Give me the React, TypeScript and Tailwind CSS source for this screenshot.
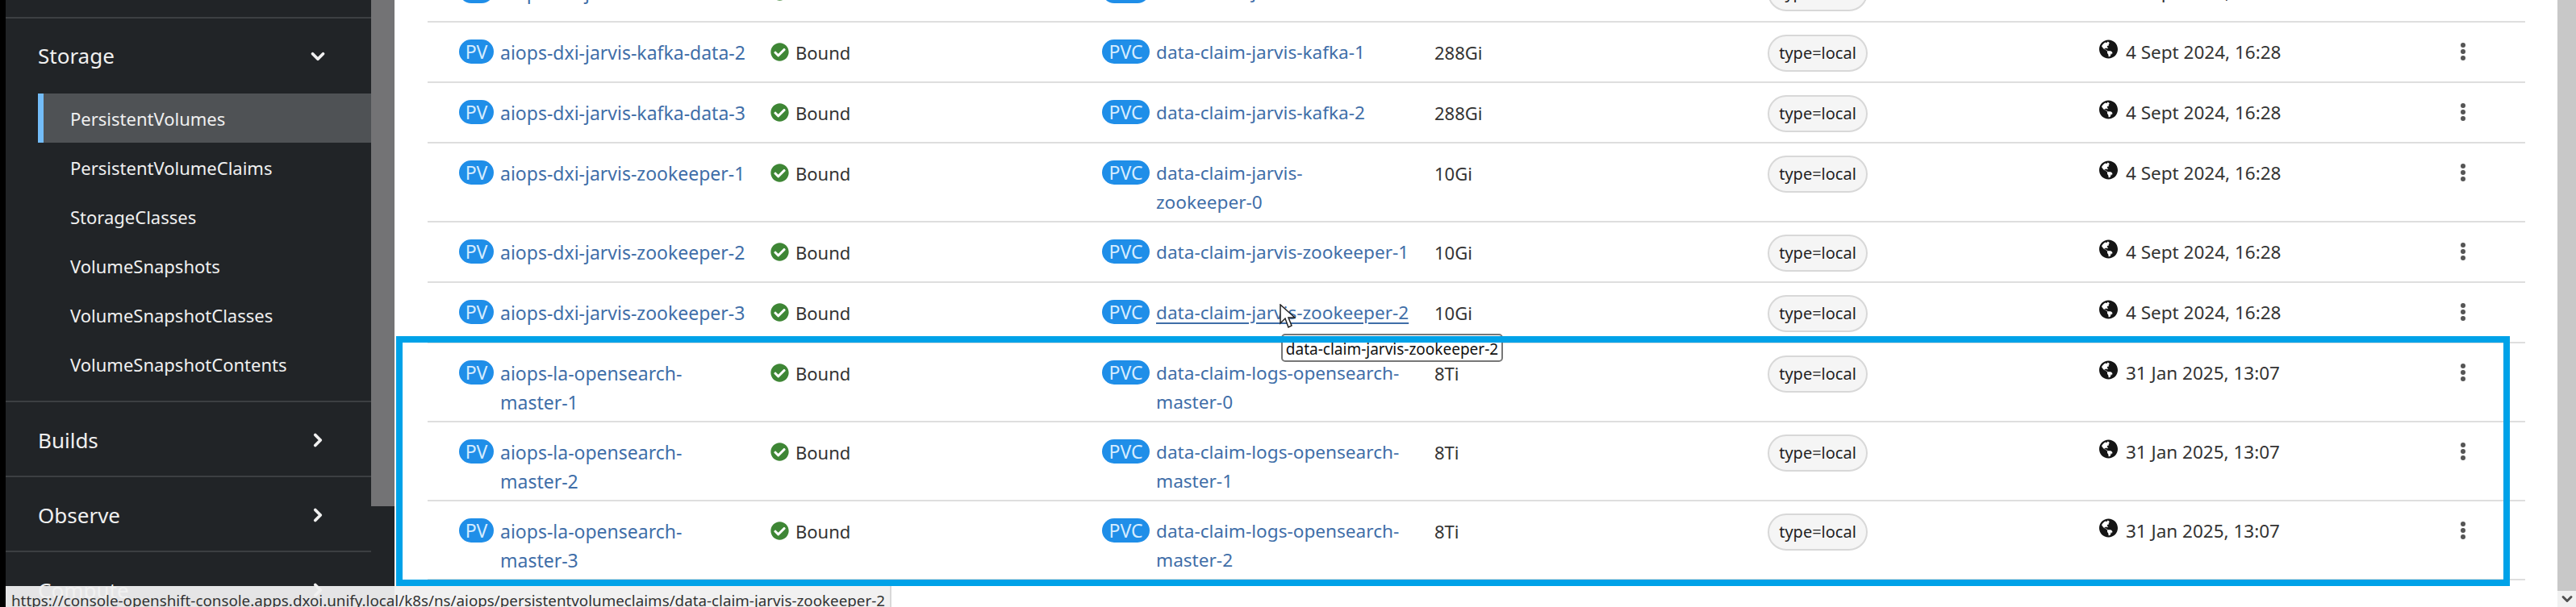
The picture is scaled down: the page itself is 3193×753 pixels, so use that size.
import React from "react";
import { ChevronDown, ChevronRight } from "lucide-react";

const storageLinks = [
  "PersistentVolumes",
  "PersistentVolumeClaims",
  "StorageClasses",
  "VolumeSnapshots",
  "VolumeSnapshotClasses",
  "VolumeSnapshotContents",
];

const rows = [
  { name: "aiops-dxi-jarvis-kafka-data-1", claim: "data-claim-jarvis-kafka-0", size: "288Gi", date: "4 Sept 2024, 16:28" },
  { name: "aiops-dxi-jarvis-kafka-data-2", claim: "data-claim-jarvis-kafka-1", size: "288Gi", date: "4 Sept 2024, 16:28" },
  { name: "aiops-dxi-jarvis-kafka-data-3", claim: "data-claim-jarvis-kafka-2", size: "288Gi", date: "4 Sept 2024, 16:28" },
  { name: "aiops-dxi-jarvis-zookeeper-1", claim: "data-claim-jarvis-\nzookeeper-0", size: "10Gi", date: "4 Sept 2024, 16:28" },
  { name: "aiops-dxi-jarvis-zookeeper-2", claim: "data-claim-jarvis-zookeeper-1", size: "10Gi", date: "4 Sept 2024, 16:28" },
  { name: "aiops-dxi-jarvis-zookeeper-3", claim: "data-claim-jarvis-zookeeper-2", size: "10Gi", date: "4 Sept 2024, 16:28", hovered: true },
  { name: "aiops-la-opensearch-\nmaster-1", claim: "data-claim-logs-opensearch-\nmaster-0", size: "8Ti", date: "31 Jan 2025, 13:07" },
  { name: "aiops-la-opensearch-\nmaster-2", claim: "data-claim-logs-opensearch-\nmaster-1", size: "8Ti", date: "31 Jan 2025, 13:07" },
  { name: "aiops-la-opensearch-\nmaster-3", claim: "data-claim-logs-opensearch-\nmaster-2", size: "8Ti", date: "31 Jan 2025, 13:07" },
];

const Badge = ({ label, width }: { label: string; width: string }) => (
  <span className={`${width} h-[30px] mt-[6px] shrink-0 rounded-full bg-[#1f8ee8] text-[#d5ecff] text-[23px] leading-[30px] text-center`}>
    {label}
  </span>
);

const BoundIcon = () => (
  <svg viewBox="0 0 512 512" className="w-[23px] h-[23px] mt-[10px] shrink-0 fill-[#3e8635]">
    <path d="M504 256c0 137-111 248-248 248S8 393 8 256 119 8 256 8s248 111 248 248zM227.3 387.3l184-184c6.200-6.200 6.200-16.400 0-22.600l-22.600-22.600c-6.200-6.200-16.400-6.200-22.600 0L216 308.100l-70.100-70.100c-6.200-6.200-16.400-6.200-22.600 0l-22.600 22.600c-6.200 6.200-6.200 16.400 0 22.600l104 104c6.200 6.200 16.400 6.200 22.600 0z" />
  </svg>
);

const GlobeIcon = () => (
  <svg viewBox="0 0 496 512" className="w-[23px] h-[24px] mt-[6px] shrink-0 fill-[#151515]">
    <path d="M248 8C111 8 0 119 0 256s111 248 248 248 248-111 248-248S385 8 248 8zm82.300 357.600c-3.900 3.900-8 8-11.300 11.300-3 3-5.100 6.700-6.200 10.700-1.500 5.700-2.700 11.400-4.800 16.900l-17.400 46.800c-13.800 3-28 4.700-42.600 4.700v-27.400c1.700-12.600-7.600-36.300-22.600-51.300-6-6-9.400-14.100-9.400-22.600v-32c0-11.600-6.300-22.300-16.500-28-14.400-8-34.800-19.100-48.800-26.100-11.500-5.800-22.100-13.100-31.700-21.800l-.8-.7c-6.800-6.200-12.900-13.100-18.100-20.700-9.400-13.800-24.700-36.500-34.700-51.300 20.600-45.700 57.600-82.500 103.500-102.700l24 12c10.600 5.300 23.100-2.400 23.100-14.300v-11.300c8-1.300 16.100-2.100 24.400-2.400l28.300 28.300c6.200 6.200 6.200 16.400 0 22.600L264 110.600l-12.500 12.500c-3.100 3.100-3.100 8.200 0 11.300l5.700 5.700c3.100 3.100 3.100 8.200 0 11.300l-9.700 9.700c-1.500 1.500-3.500 2.300-5.700 2.300h-10.900c-2.100 0-4.100.8-5.600 2.300l-12.100 11.800c-2.500 2.400-3.100 6.200-1.600 9.300l19 37.900c3.200 6.500-1.500 14.100-8.700 14.100h-6.900c-2.300 0-4.600-.8-6.300-2.400l-11.300-9.800c-2.600-2.200-6.200-2.800-9.300-1.700L140.700 243c-2.900 1-4.800 3.700-4.800 6.700 0 2.700 1.500 5.100 3.900 6.300l13.400 6.700c11.400 5.700 24 8.700 36.700 8.700s27.300 33 38.700 33h72.500c9.700 0 18.900 3.800 25.700 10.600l15.600 15.600c6.500 6.500 10.200 15.400 10.200 24.600 0 17.900-7.100 35-19.700 47.700z" />
  </svg>
);

const Kebab = () => (
  <span className="flex flex-col gap-[2px] items-center w-[6px] mt-[10px]">
    <span className="w-[6px] h-[6px] rounded-full bg-[#555]" />
    <span className="w-[6px] h-[6px] rounded-full bg-[#555]" />
    <span className="w-[6px] h-[6px] rounded-full bg-[#555]" />
  </span>
);

const App = () => {
  return (
    <div className="relative w-[3193px] h-[753px] overflow-hidden bg-white flex font-['Noto_Sans',sans-serif]">
      <aside className="w-[489px] h-full shrink-0 border-l-[7px] border-black bg-[#212427] flex">
        <nav className="w-[453px] text-[#f0f0f0]">
          <div className="h-[23px] border-b-2 border-[#3c3f42]" />
          <div className="h-[93px] pl-[40px] pr-[53px] flex items-center justify-between text-[26px]">
            <span>Storage</span>
            <ChevronDown size={26} strokeWidth={3.5} />
          </div>
          <ul className="pl-[40px] text-[22px]">
            {storageLinks.map((link, i) => (
              <li
                key={link}
                className={
                  i === 0
                    ? "h-[61px] flex items-center pt-[2px] pl-[33px] border-l-[7px] border-[#73bcf7] bg-[#4f5255]"
                    : "h-[61px] flex items-center pt-[2px] pl-[40px]"
                }
              >
                {link}
              </li>
            ))}
          </ul>
          <div className="h-[17px] border-b-2 border-[#3c3f42]" />
          {["Builds", "Observe", "Compute"].map((group) => (
            <div
              key={group}
              className="h-[93px] pt-[3px] pl-[40px] pr-[53px] flex items-center justify-between text-[26px] border-b-2 border-[#3c3f42]"
            >
              <span>{group}</span>
              <ChevronRight size={26} strokeWidth={3.5} />
            </div>
          ))}
        </nav>
        <div className="w-[29px] h-[628px] bg-[#737375]" />
      </aside>

      <main className="flex-1 pl-[41px] pr-[40px] min-w-0">
        <div className="-mt-[47px] w-[2600px]">
          {rows.map((row) => (
            <div
              key={row.name}
              className="grid grid-cols-[386px_411px_412px_413px_411px_448px_1fr] pl-[39px] pt-[15px] pb-[5px] border-b-2 border-[#dedede] text-[22px] leading-[36px] text-[#333]"
            >
              <div className="flex gap-[8px] items-start">
                <Badge label="PV" width="w-[43px]" />
                <a className="text-[#3f6ea8] text-[23px] whitespace-pre-line mt-[4px]">{row.name}</a>
              </div>
              <div className="flex gap-[8px] items-start">
                <BoundIcon />
                <span className="mt-[4px]">Bound</span>
              </div>
              <div className="flex gap-[8px] items-start">
                <Badge label="PVC" width="w-[59px]" />
                <a className={`text-[#3f6ea8] text-[22.6px] whitespace-pre-line mt-[4px] ${row.hovered ? "underline underline-offset-4" : ""}`}>
                  {row.claim}
                </a>
              </div>
              <div className="mt-[4px]">{row.size}</div>
              <div className="pb-[7px]">
                <span className="inline-flex items-center justify-center w-[124px] h-[46px] rounded-[23px] border-2 border-[#d8d8d8] bg-[#f5f5f5] text-[#222] text-[20px]">
                  type=local
                </span>
              </div>
              <div className="flex gap-[10px] items-start">
                <GlobeIcon />
                <span className="mt-[4px] text-[22.5px]">{row.date}</span>
              </div>
              <div>
                <Kebab />
              </div>
            </div>
          ))}
        </div>
      </main>

      <div className="w-[23px] h-full shrink-0 flex flex-col bg-[#f1f1f1]">
        <div className="h-[733px] bg-[#c8c8c8]" />
        <div className="flex-1 flex items-center justify-center text-[#505050]">
          <ChevronDown size={20} strokeWidth={3.5} />
        </div>
      </div>

      {/* annotation box drawn on top of the screenshot */}
      <div className="absolute left-[491px] top-[417px] w-[2620px] h-[310px] border-[8px] border-[#00a2e8]" />

      {/* tooltip + pointer */}
      <div className="absolute left-[1588px] top-[414px] w-[275px] h-[35px] pt-[1px] rounded-[5px] border-2 border-[#777] bg-white text-[#111] text-[19px] leading-[33px] text-center whitespace-nowrap">
        data-claim-jarvis-zookeeper-2
      </div>
      <div className="absolute left-[1588px] top-[417px] w-[275px] h-[8px] bg-[#00a2e8]" />
      <svg viewBox="0 0 20 32" className="absolute left-[1586px] top-[377px] w-[20px] h-[32px]">
        <path d="M1 1 L1 24 L7 18 L11 29 L15 27 L11 17 L19 17 Z" fill="#fff" stroke="#222" strokeWidth="1.500" />
      </svg>

      {/* status bar */}
      <div className="absolute left-[7px] bottom-0 w-[1098px] h-[26px] pt-[5px] border-r-2 border-[#d8d8d8] bg-[#f0f0f0]/95 text-[#333] text-[18.800px] leading-[26px] pl-[7px] whitespace-nowrap overflow-hidden">
        https://console-openshift-console.apps.dxoi.unify.local/k8s/ns/aiops/persistentvolumeclaims/data-claim-jarvis-zookeeper-2
      </div>
    </div>
  );
};

export default App;
